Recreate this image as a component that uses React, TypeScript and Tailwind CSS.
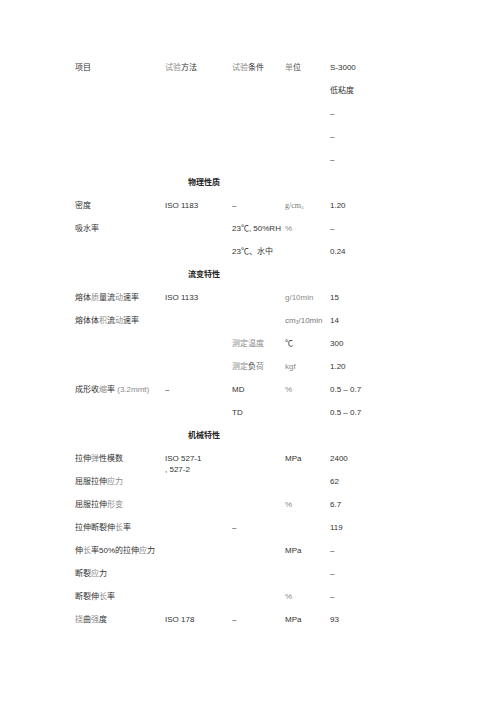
import React from "react";

// one data row: item, method, condition, unit, value
type Row = {
  item?: React.ReactNode;
  method?: React.ReactNode;
  cond?: React.ReactNode;
  unit?: React.ReactNode;
  value?: React.ReactNode;
  section?: string;
};

const L = ({ children }: { children: React.ReactNode }) => (
  <span className="text-[#8a8a8a]">{children}</span>
);

const rows: Row[] = [
  {
    item: "项目",
    method: (
      <>
        <L>试验</L>方法
      </>
    ),
    cond: (
      <>
        <L>试验</L>条件
      </>
    ),
    unit: (
      <>
        <L>单</L>位
      </>
    ),
    value: "S-3000",
  },
  { value: "低粘度" },
  { value: "–" },
  { value: "–" },
  { value: "–" },
  { section: "物理性质" },
  {
    item: "密度",
    method: "ISO 1183",
    cond: "–",
    unit: (
      <span className="font-['Liberation_Serif',serif] text-[#777]">
        g/cm<sub className="text-[5px]">3</sub>
      </span>
    ),
    value: "1.20",
  },
  { item: "吸水率", cond: "23℃, 50%RH", unit: <L>%</L>, value: "–" },
  { cond: "23℃、水中", value: "0.24" },
  { section: "流变特性" },
  {
    item: (
      <>
        熔体<L>质</L>量流<L>动</L>速率
      </>
    ),
    method: "ISO 1133",
    unit: <L>g/10min</L>,
    value: "15",
  },
  {
    item: (
      <>
        熔体体<L>积</L>流<L>动</L>速率
      </>
    ),
    unit: (
      <span className="text-[#777]">
        cm<sub className="text-[5px]">3</sub>/10min
      </span>
    ),
    value: "14",
  },
  { cond: <L>测定温度</L>, unit: "℃", value: "300" },
  {
    cond: (
      <>
        <L>测定</L>负<L>荷</L>
      </>
    ),
    unit: <L>kgf</L>,
    value: "1.20",
  },
  {
    item: (
      <>
        成形收<L>缩</L>率 <L>(3.2mmt)</L>
      </>
    ),
    method: "–",
    cond: "MD",
    unit: <L>%</L>,
    value: "0.5 – 0.7",
  },
  { cond: "TD", value: "0.5 – 0.7" },
  { section: "机械特性" },
  {
    item: (
      <>
        拉伸<L>弹</L>性模数
      </>
    ),
    method: (
      <span className="block">
        ISO 527-1
        <br />, 527-2
      </span>
    ),
    unit: "MPa",
    value: "2400",
  },
  {
    item: (
      <>
        屈服拉伸<L>应力</L>
      </>
    ),
    value: "62",
  },
  {
    item: (
      <>
        屈服拉伸<L>形变</L>
      </>
    ),
    unit: <L>%</L>,
    value: "6.7",
  },
  {
    item: (
      <>
        拉伸断裂伸<L>长</L>率
      </>
    ),
    cond: "–",
    value: "119",
  },
  {
    item: (
      <>
        伸<L>长</L>率50%的拉伸<L>应</L>力
      </>
    ),
    unit: "MPa",
    value: "–",
  },
  {
    item: (
      <>
        断裂<L>应</L>力
      </>
    ),
    value: "–",
  },
  {
    item: (
      <>
        断裂伸<L>长</L>率
      </>
    ),
    unit: <L>%</L>,
    value: "–",
  },
  {
    item: (
      <>
        <L>挠</L>曲<L>强</L>度
      </>
    ),
    method: "ISO 178",
    cond: "–",
    unit: "MPa",
    value: "93",
  },
];

export default function App() {
  return (
    <div className="w-[496px] h-[702px] bg-white pt-[56px] pl-[75px] text-[8px] leading-[11px] text-[#333] font-['Liberation_Sans','Noto_Sans_CJK_SC',sans-serif]">
      {rows.map((r, i) =>
        r.section ? (
          <div key={i} className="h-[23px] pt-[6px] pl-[113px] font-bold text-[#222]">
            {r.section}
          </div>
        ) : (
          <div key={i} className="flex h-[23px] pt-[6px]">
            <div className="w-[90px] whitespace-nowrap">{r.item}</div>
            <div className="w-[67px] whitespace-nowrap">{r.method}</div>
            <div className="w-[53px] whitespace-nowrap">{r.cond}</div>
            <div className="w-[45px] whitespace-nowrap">{r.unit}</div>
            <div className="flex-1 whitespace-nowrap">{r.value}</div>
          </div>
        )
      )}
    </div>
  );
}
